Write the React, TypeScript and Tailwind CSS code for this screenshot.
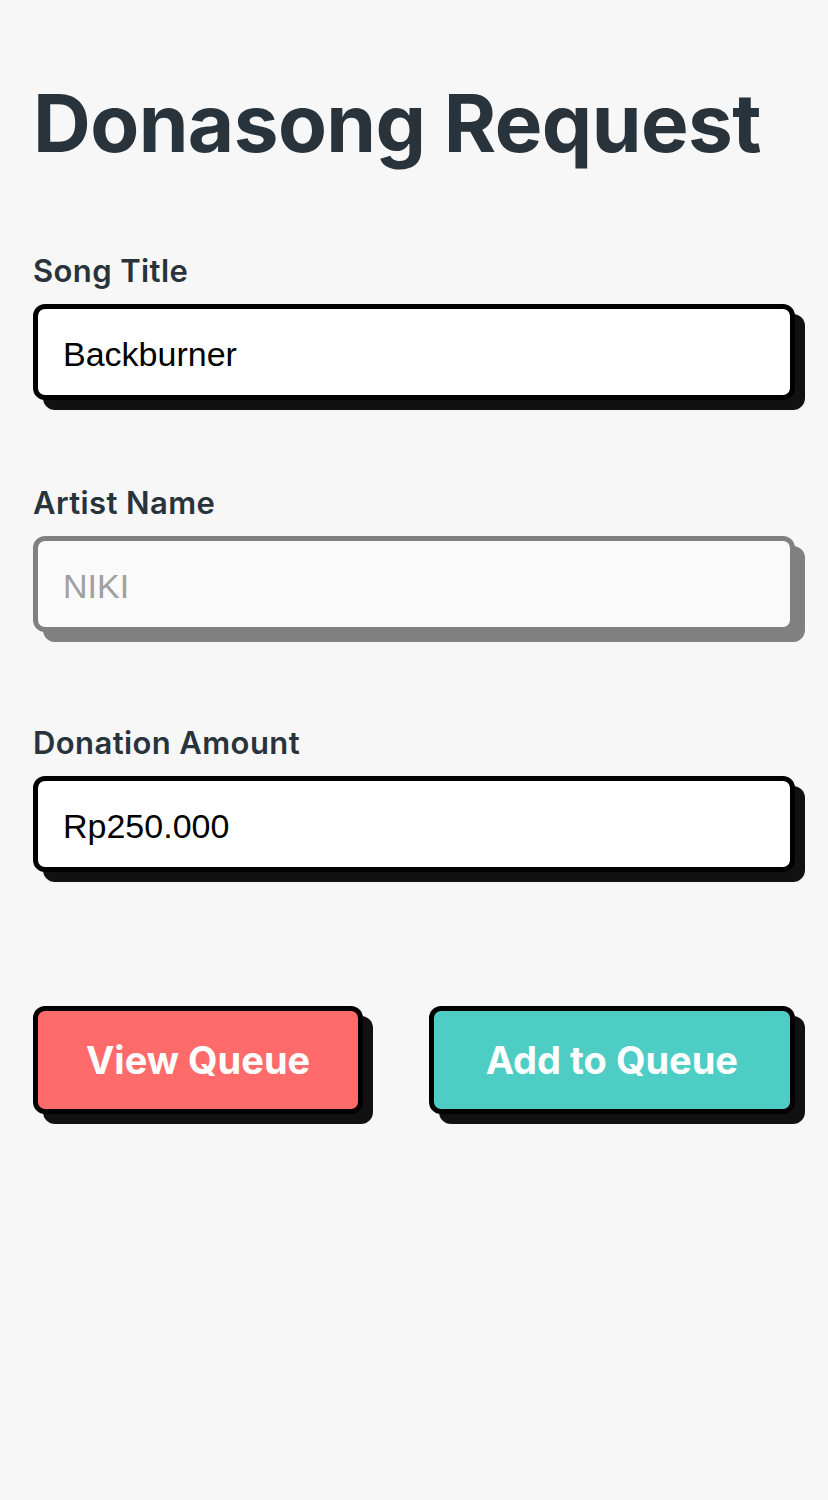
import { useState } from 'react';

const sans = "font-['Inter','Noto_Sans',sans-serif]";
const arial = "font-['Liberation_Sans',Arial,sans-serif]";

export default function App() {
  const [title, setTitle] = useState('Backburner');
  const [amount, setAmount] = useState('Rp250.000');

  return (
    <div className={`min-h-screen bg-[#f7f7f7] px-[33px] pt-[83px] ${sans}`}>
      <h1 className="text-[80px] leading-none font-bold tracking-[-0.6px] text-[#29333b]">Donasong Request</h1>

      {/* Song title */}
      <label className="mt-[92px] block text-[31px] leading-none font-semibold tracking-[0.4px] text-[#29333b]">Song Title</label>
      <input
        value={title}
        onChange={(e) => setTitle(e.target.value)}
        className={`mt-[18px] block h-[96px] w-full rounded-[12px] border-[5px] border-black bg-white pt-[4px] pl-[25px] text-[34px] text-black shadow-[10px_10px_0_#111] outline-none ${arial}`}
      />

      {/* Artist name (disabled) */}
      <label className="mt-[87px] block text-[31px] leading-none font-semibold tracking-[0.4px] text-[#29333b]">Artist Name</label>
      <input
        disabled
        placeholder="NIKI"
        className={`mt-[18px] block h-[96px] w-full rounded-[12px] border-[5px] border-[#808080] bg-[#fafafa] pt-[4px] pl-[25px] text-[34px] text-[#a0a0a0] placeholder:text-[#a0a0a0] shadow-[10px_10px_0_#808080] outline-none ${arial}`}
      />

      {/* Donation */}
      <label className="mt-[95px] block text-[31px] leading-none font-semibold tracking-[0.4px] text-[#29333b]">Donation Amount</label>
      <input
        value={amount}
        onChange={(e) => setAmount(e.target.value)}
        className={`mt-[18px] block h-[96px] w-full rounded-[12px] border-[5px] border-black bg-white pt-[4px] pl-[25px] text-[34px] text-black shadow-[10px_10px_0_#111] outline-none ${arial}`}
      />

      <div className="mt-[134px] flex justify-between">
        <button className="h-[108px] rounded-[12px] border-[5px] border-black bg-[#ff6b6b] px-[48px] text-[38px] font-bold text-white shadow-[10px_10px_0_#111]">
          View Queue
        </button>
        <button className="h-[108px] rounded-[12px] border-[5px] border-black bg-[#4ecdc4] px-[52px] text-[38px] font-bold text-white shadow-[10px_10px_0_#111]">
          Add to Queue
        </button>
      </div>
    </div>
  );
}
